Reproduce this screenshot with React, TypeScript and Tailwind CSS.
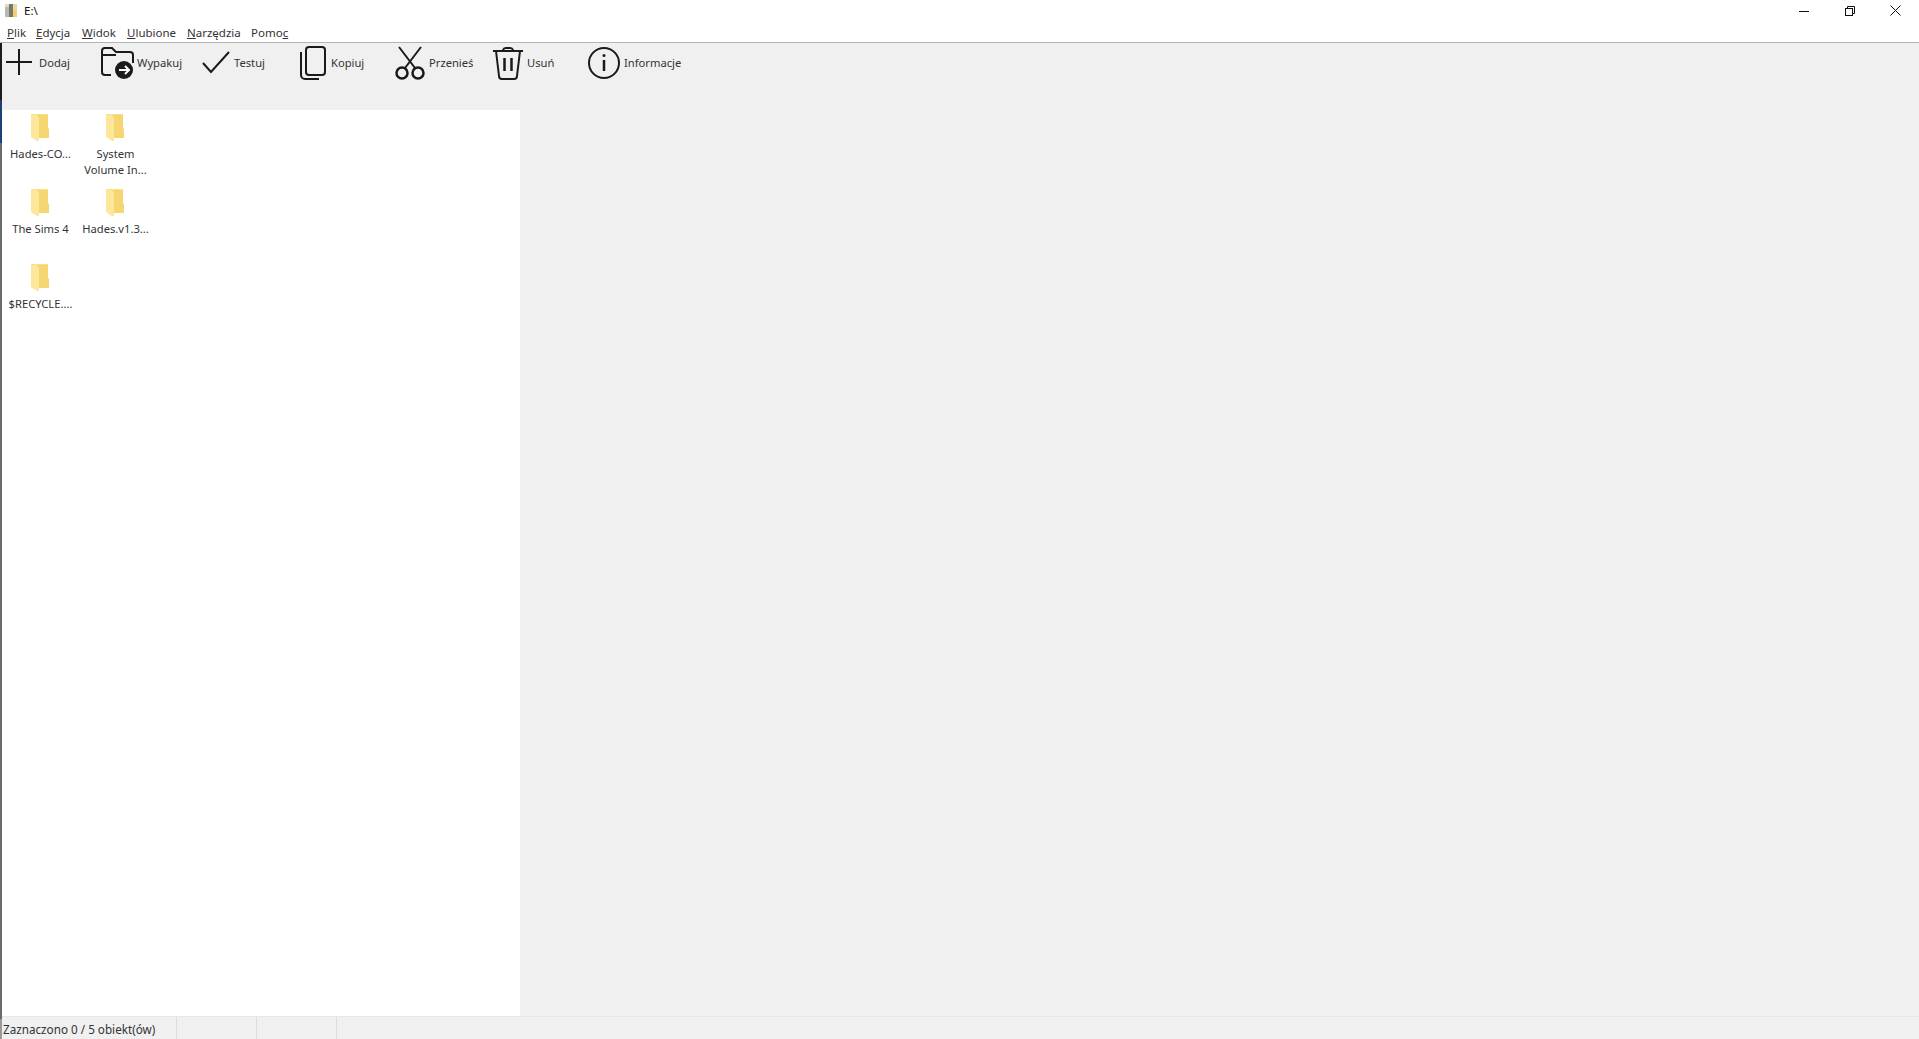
import React from 'react';

const font = "font-['Noto_Sans','Open_Sans',sans-serif]";

const PlusIcon = () => (
  <svg width="28" height="28" viewBox="0 0 28 28" fill="none" stroke="#1a1a1a" strokeWidth="2" className="-translate-y-[1px]">
    <path d="M14 1v26M1 14h26" />
  </svg>
);

const ExtractIcon = () => (
  <svg width="34" height="32" viewBox="0 0 34 32" fill="none">
    <path d="M10 28H4a3 3 0 0 1-3-3V4a3 3 0 0 1 3-3h7l4 4h14a3 3 0 0 1 3 3v8M1 8h14" stroke="#1a1a1a" strokeWidth="2" />
    <circle cx="23" cy="23" r="9" fill="#1a1a1a" />
    <path d="M18 23h9M24 19l4 4-4 4" stroke="#fff" strokeWidth="2" />
  </svg>
);

const CheckIcon = () => (
  <svg width="28" height="24" viewBox="0 0 28 24" fill="none" stroke="#1a1a1a" strokeWidth="2">
    <path d="M1 12l8 9L27 1" />
  </svg>
);

const CopyIcon = () => (
  <svg width="26" height="34" viewBox="0 0 26 34" fill="none" stroke="#1a1a1a" strokeWidth="2">
    <rect x="6" y="1" width="19" height="28" rx="3" />
    <path d="M1 6v23a4 4 0 0 0 4 4h14" />
  </svg>
);

const ScissorsIcon = () => (
  <svg width="30" height="34" viewBox="0 0 30 34" fill="none" stroke="#1a1a1a" strokeWidth="2.500">
    <circle cx="7" cy="27" r="5.500" />
    <circle cx="23" cy="27" r="5.500" />
    <path d="M10 22L26 1M20 22L4 1" strokeWidth="2" />
  </svg>
);

const TrashIcon = () => (
  <svg width="32" height="34" viewBox="0 0 32 34" fill="none" stroke="#1a1a1a" strokeWidth="2">
    <path d="M1 5h30M11 5V4a3 3 0 0 1 3-2h4a3 3 0 0 1 3 2v1M4 5l3 25a3 3 0 0 0 3 3h12a3 3 0 0 0 3-3l3-25" />
    <path d="M12.500 12v13M19.500 12v13" strokeWidth="2.500" />
  </svg>
);

const InfoIcon = () => (
  <svg width="32" height="32" viewBox="0 0 32 32" fill="none" stroke="#1a1a1a" strokeWidth="2">
    <circle cx="16" cy="16" r="15" />
    <path d="M16 13v11" strokeWidth="2.500" />
    <circle cx="16" cy="8.500" r="1.500" fill="#1a1a1a" stroke="none" />
  </svg>
);

const FolderIcon = () => (
  <svg width="18" height="27" viewBox="0 0 18 27" className="shrink-0 -translate-x-[1px]">
    <path d="M5 0h12v14l1 1v9H5z" fill="#f6d671" />
    <path d="M0 0h6v1l2 3v23h-2l-6-4z" fill="#fde79a" />
    <path d="M0 0h17v1H0z" fill="#fbe08a" />
  </svg>
);

const AppIcon = () => (
  <svg width="12" height="13" viewBox="0 0 12 13">
    <rect x="0" y="0" width="12" height="13" fill="#e9d9a8" />
    <rect x="0" y="3" width="4" height="10" fill="#b9b9b4" />
    <rect x="4" y="0" width="4" height="13" fill="#77776f" />
    <rect x="8" y="6" width="4" height="7" fill="#f2cf6a" />
  </svg>
);

const menus = [
  { before: '', key: 'P', after: 'lik', width: 'w-[29px]' },
  { before: '', key: 'E', after: 'dycja', width: 'w-[46px]' },
  { before: '', key: 'W', after: 'idok', width: 'w-[45px]' },
  { before: '', key: 'U', after: 'lubione', width: 'w-[60px]' },
  { before: '', key: 'N', after: 'arzędzia', width: 'w-[64px]' },
  { before: 'Pomo', key: 'c', after: '', width: 'w-[48px]' },
];

const tools = [
  { label: 'Dodaj', icon: <PlusIcon />, box: 'w-[101px]', iconBox: 'w-[39px] pl-[5px]' },
  { label: 'Wypakuj', icon: <ExtractIcon />, box: 'w-[101px]', iconBox: 'w-[36px]' },
  { label: 'Testuj', icon: <CheckIcon />, box: 'w-[98px]', iconBox: 'w-[32px]' },
  { label: 'Kopiuj', icon: <CopyIcon />, box: 'w-[95px]', iconBox: 'w-[31px]' },
  { label: 'Przenieś', icon: <ScissorsIcon />, box: 'w-[97px]', iconBox: 'w-[34px]' },
  { label: 'Usuń', icon: <TrashIcon />, box: 'w-[96px]', iconBox: 'w-[35px]' },
  { label: 'Informacje', icon: <InfoIcon />, box: 'w-[100px]', iconBox: 'w-[36px]' },
];

const folders = ['Hades-CO...', 'System Volume In...', 'The Sims 4', 'Hades.v1.3...', '$RECYCLE....'];

export default function App() {
  return (
    <div className={`${font} flex h-[1039px] w-[1919px] flex-col overflow-hidden bg-white text-[11.5px] text-[#333]`}>
      {/* title bar */}
      <div className="flex h-[21px] items-center pl-[5px]">
        <AppIcon />
        <span className="ml-[7px] text-[#111]">E:\</span>
        <div className="ml-auto flex items-center pr-[1px]">
          <div className="flex w-[46px] justify-center">
            <svg width="10" height="10" viewBox="0 0 10 10" stroke="#111" fill="none"><path d="M0 5.500h10" /></svg>
          </div>
          <div className="flex w-[46px] justify-center">
            <svg width="10" height="10" viewBox="0 0 10 10" stroke="#111" fill="none">
              <rect x="0.500" y="2.500" width="7" height="7" />
              <path d="M2.500 2.500V.5h7v7h-2" />
            </svg>
          </div>
          <div className="flex w-[45px] justify-center pr-[1px]">
            <svg width="11" height="11" viewBox="0 0 11 11" stroke="#111" fill="none"><path d="M.5.500l10 10M10.500.500l-10 10" /></svg>
          </div>
        </div>
      </div>

      {/* menu */}
      <div className="flex h-[22px] items-center border-b border-[#b4b4b4] pl-[7px] pt-[3px] text-[#333]">
        {menus.map(m => (
          <span key={m.key} className={m.width}>
            {m.before}
            <span className="underline">{m.key}</span>
            {m.after}
          </span>
        ))}
      </div>

      <div className="flex min-h-0 flex-1">
        {/* window behind shows through on the left edge */}
        <div className="flex w-[2px] shrink-0 flex-col">
          <div className="h-[57px] bg-[#1c1c1c]" />
          <div className="h-[43px] bg-[#1f3f77]" />
          <div className="flex-1 bg-[#6b6b6b]" />
          <div className="h-[20px] bg-[#9a9a9a]" />
        </div>

        {/* toolbar + body */}
        <div className="flex min-w-0 flex-1 flex-col bg-[#f0f0f0]">
          <div className="flex h-[67px] shrink-0 -ml-[2px] pt-[2px] text-[11.2px]">
            {tools.map(t => (
              <div key={t.label} className={`${t.box} flex h-[36px] items-center`}>
                <div className={`${t.iconBox} flex shrink-0 items-center`}>{t.icon}</div>
                <span>{t.label}</span>
              </div>
            ))}
          </div>

          <div className="min-h-0 w-[518px] flex-1 bg-white pl-[1px] text-[11.2px]">
            <div className="grid grid-cols-[75px_75px] grid-rows-[75px_75px_75px]">
              {folders.map(name => (
                <div key={name} className="flex flex-col items-center pt-[4px]">
                  <FolderIcon />
                  <span className="mt-[5px] w-[68px] text-center leading-[16px]">{name}</span>
                </div>
              ))}
            </div>
          </div>

          {/* status bar */}
          <div className="flex h-[23px] shrink-0 items-center border-t border-[#e6e6e6] text-[11.7px] text-[#333]">
            <div className="h-full w-[175px] border-r border-[#dcdcdc] pl-[1px] leading-[24px]">Zaznaczono 0 / 5 obiekt(ów)</div>
            <div className="h-full w-[80px] border-r border-[#dcdcdc]" />
            <div className="h-full w-[80px] border-r border-[#dcdcdc]" />
          </div>
        </div>
      </div>
    </div>
  );
}
